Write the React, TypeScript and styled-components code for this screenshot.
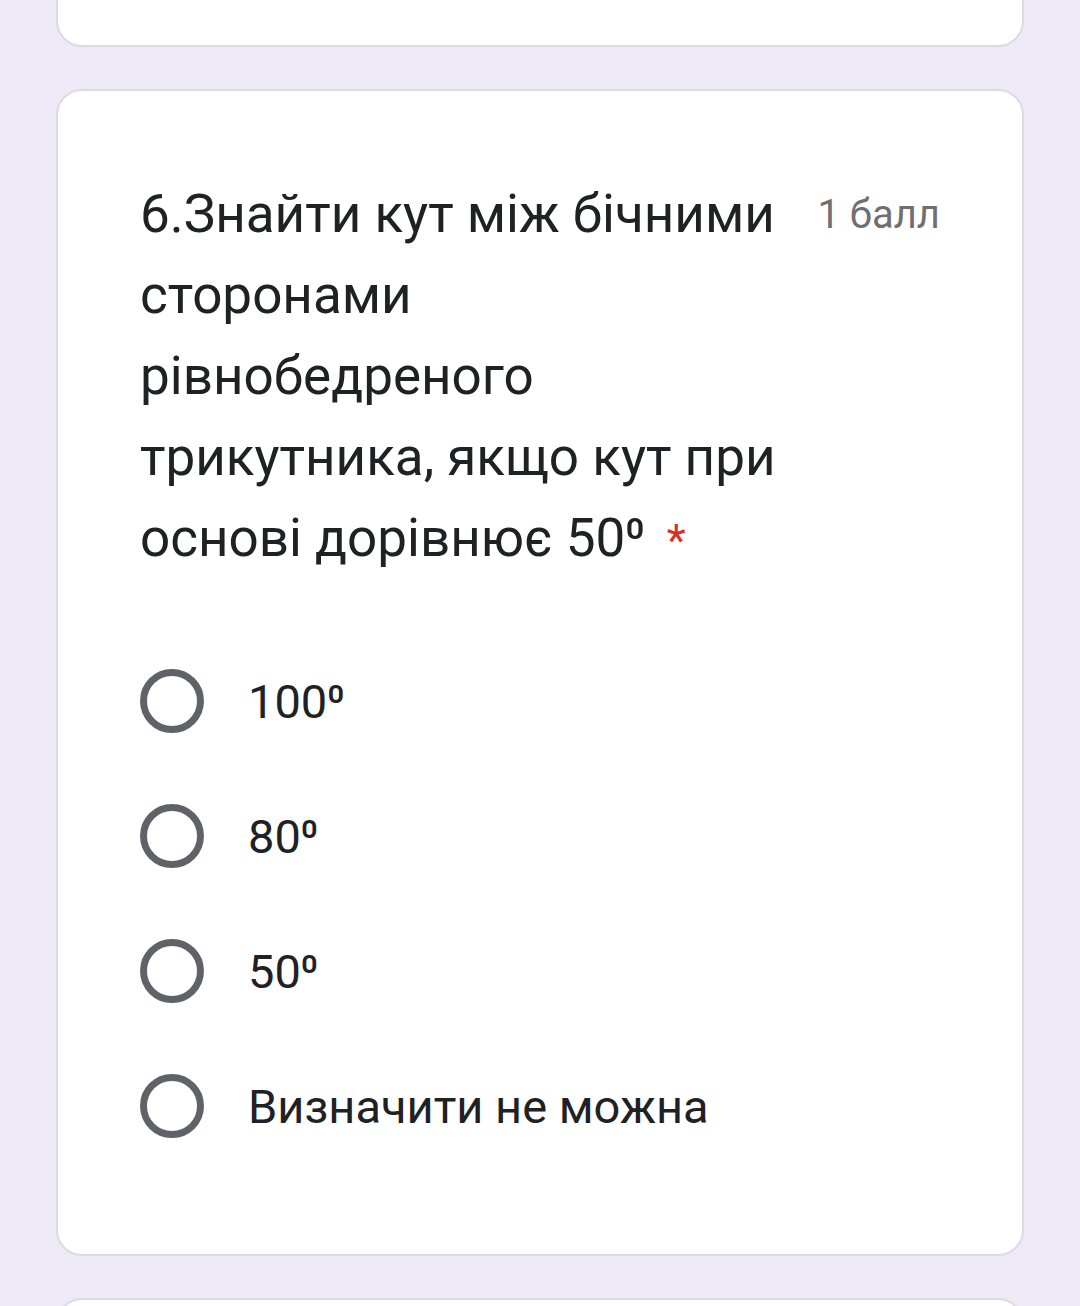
import React from "react";
import styled, { createGlobalStyle } from "styled-components";

const Global = createGlobalStyle`
  html, body { margin: 0; padding: 0; background: #ede9f7; }
  body { font-family: Roboto, "Noto Sans", sans-serif; }
`;

const Page = styled.div`
  display: flex;
  flex-direction: column;
  gap: 42px;
  padding: 0 56px;
  margin-top: -60px;
  height: 1366px;
  overflow: hidden;
`;

const Card = styled.div<{ $h?: number }>`
  background: #ffffff;
  border: 2px solid #dcdae2;
  border-radius: 26px;
  box-sizing: border-box;
  ${(p) => (p.$h ? `height: ${p.$h}px; flex-shrink: 0;` : "")}
`;

const QuestionCard = styled(Card)`
  padding: 83px 82px 116px 82px;
  flex-shrink: 0;
`;

const Header = styled.div`
  display: flex;
  align-items: flex-start;
`;

const Title = styled.div`
  flex: 1;
  max-width: 665px;
  font-size: 53px;
  line-height: 81px;
  color: #202124;
`;

const Star = styled.span`
  color: #d93025;
  font-size: 44px;
  margin-left: 22px;
`;

const Points = styled.div`
  margin-left: auto;
  font-size: 40px;
  line-height: 81px;
  color: #6f6f72;
  white-space: nowrap;
`;

const Options = styled.div`
  display: flex;
  flex-direction: column;
  gap: 71px;
  margin-top: 87px;
`;

const Option = styled.label`
  display: flex;
  align-items: center;
  gap: 44px;
  height: 64px;
  font-size: 47px;
  color: #202124;
`;

const Radio = styled.span`
  width: 64px;
  height: 64px;
  border-radius: 50%;
  border: 7px solid #5f6368;
  box-sizing: border-box;
  flex-shrink: 0;
`;

const options = ["100⁰", "80⁰", "50⁰", "Визначити не можна"];

export default function App() {
  return (
    <>
      <Global />
      <Page>
        <Card $h={107} />
        <QuestionCard>
          <Header>
            <Title>
              6.Знайти кут між бічними сторонами рівнобедреного трикутника, якщо кут при основі дорівнює 50⁰
              <Star>*</Star>
            </Title>
            <Points>1 балл</Points>
          </Header>
          <Options>
            {options.map((o) => (
              <Option key={o}>
                <Radio />
                {o}
              </Option>
            ))}
          </Options>
        </QuestionCard>
        <Card $h={200} />
      </Page>
    </>
  );
}
